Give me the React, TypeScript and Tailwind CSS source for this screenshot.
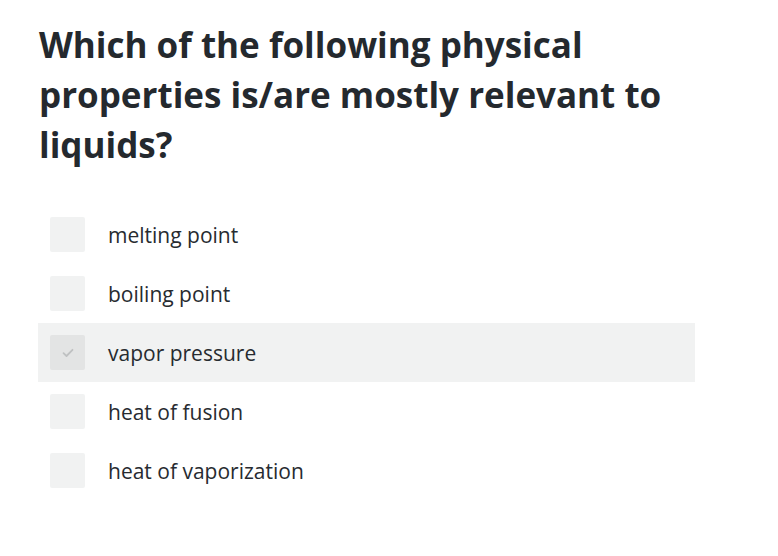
import React, { useState } from 'react';

const options = [
  'melting point',
  'boiling point',
  'vapor pressure',
  'heat of fusion',
  'heat of vaporization',
];

export default function App() {
  const [checked, setChecked] = useState<number[]>([2]);

  const toggle = (i: number) => {
    setChecked(prev => (prev.includes(i) ? prev.filter(x => x !== i) : [...prev, i]));
  };

  return (
    <div
      className="w-[778px] h-[556px] bg-white text-[#2a2e33]"
      style={{ fontFamily: '"Open Sans", "Liberation Sans", sans-serif' }}
    >
      <div className="pl-[38px] pt-[20px] w-[700px]">
        <h1 className="text-[35px] leading-[50px] font-bold pl-[1px] text-[#24292e]">
          Which of the following physical properties is/are mostly relevant to liquids?
        </h1>
        <div className="mt-[35px] flex flex-col w-[657px]">
          {options.map((label, i) => {
            const on = checked.includes(i);
            return (
              <div
                key={label}
                onClick={() => toggle(i)}
                className={
                  'flex items-center h-[59px] pl-[12px] cursor-pointer ' +
                  (on ? 'bg-[#f1f2f2]' : '')
                }
              >
                <div
                  className={
                    'w-[35px] h-[35px] rounded-[2px] flex items-center justify-center shrink-0 ' +
                    (on ? 'bg-[#e3e4e4]' : 'bg-[#f1f2f2]')
                  }
                >
                  {on ? (
                    <svg width="12" height="10" viewBox="0 0 12 10" fill="none">
                      <path
                        d="M1.5 5.2 L4.5 8 L10.5 1.8"
                        stroke="#bfc1c2"
                        strokeWidth="1.8"
                        strokeLinecap="round"
                        strokeLinejoin="round"
                      />
                    </svg>
                  ) : null}
                </div>
                <span className="ml-[23px] text-[21px] leading-[28px] text-[#272b30]">{label}</span>
              </div>
            );
          })}
        </div>
      </div>
    </div>
  );
}
